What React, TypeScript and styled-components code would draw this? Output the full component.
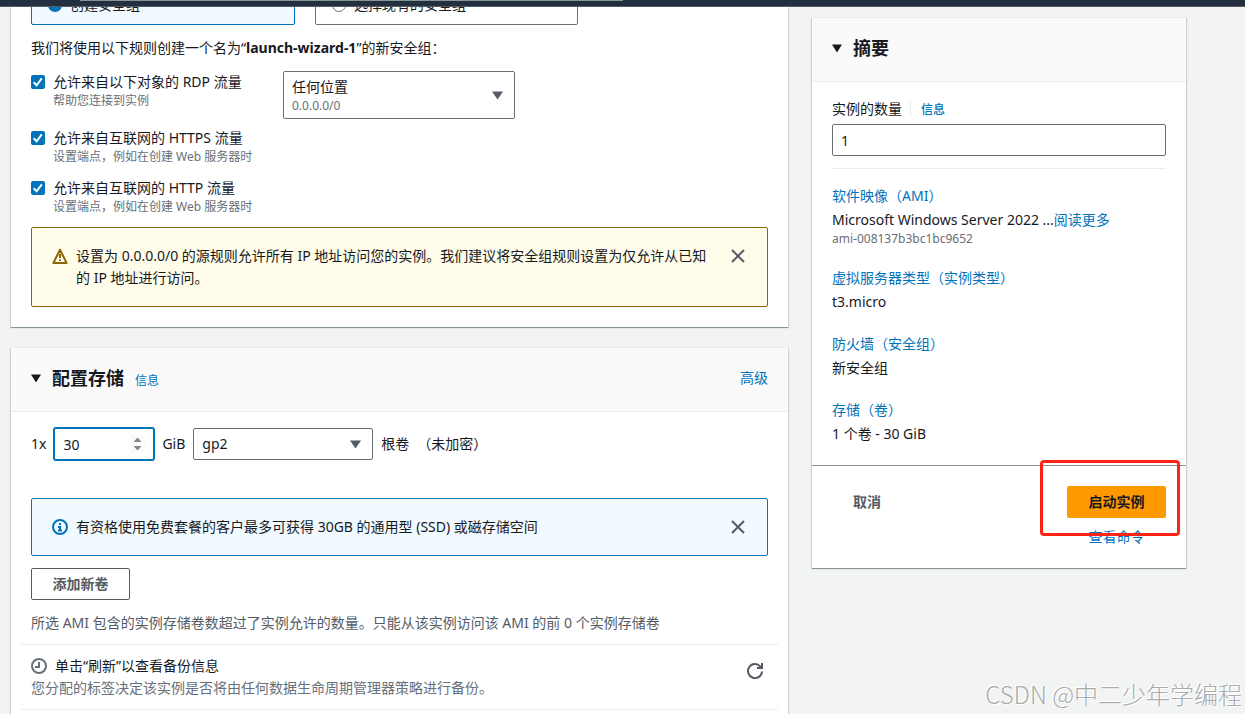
import React from 'react';
import styled, { createGlobalStyle, css } from 'styled-components';

const color = {
  page: '#f2f3f3',
  text: '#16191f',
  secondary: '#545b64',
  hint: '#687078',
  link: '#0073bb',
  line: '#eaeded',
  header: '#fafafa',
  infoBg: '#f1faff',
  warn: '#8d6605',
  warnBg: '#fffce9',
  orange: '#ff9900',
  nav: '#232f3e',
};

const GlobalStyle = createGlobalStyle`
  *, *::before, *::after { box-sizing: border-box; }
  body {
    margin: 0;
    background: ${color.page};
    color: ${color.text};
    font: 14px/22px "Noto Sans", "Noto Sans CJK SC", sans-serif;
  }
  button, input, select { font: inherit; color: inherit; margin: 0; }
  h2, p { margin: 0; }
`;

const Page = styled.div`
  height: 100vh;
  display: flex;
  flex-direction: column;
  overflow: hidden;
  position: relative;
`;

const NavBar = styled.header`
  flex: none;
  height: 7px;
  padding: 0 50% 0 80px;
  background: ${color.nav};
  border-bottom: 1px solid #545b64;
`;

const NavSearchEdge = styled.div`
  height: 1px;
  background: #879596;
`;

const Workspace = styled.main`
  flex: 1;
  min-height: 0;
  display: grid;
  grid-template-columns: minmax(0, 1fr) 374px;
  gap: 24px;
  padding: 0 59px 0 11px;
`;

const MainColumn = styled.div`
  display: flex;
  flex-direction: column;
  gap: 20px;
  min-height: 0;
`;

const Card = styled.section<{ $grow?: boolean }>`
  background: #fff;
  box-shadow: 0 1px 0 0 #879596, 1px 1px 1px 0 rgba(0, 28, 36, 0.15),
    -1px 1px 1px 0 rgba(0, 28, 36, 0.15);
  ${(p) => p.$grow && css`flex: 1;`}
`;

const CardHeader = styled.div`
  display: flex;
  align-items: center;
  gap: 11px;
  padding: 19px 20px 22px;
  background: ${color.header};
  border-top: 1px solid ${color.line};
  border-bottom: 1px solid ${color.line};
`;

const TitleGroup = styled.div`
  display: flex;
  align-items: baseline;
  gap: 11px;
  height: 22px;
`;

const CardTitle = styled.h2`
  font-size: 18px;
  line-height: 22px;
  font-weight: 700;
`;

const Link = styled.a<{ $small?: boolean; $strong?: boolean; $end?: boolean }>`
  color: ${color.link};
  text-decoration: none;
  ${(p) => p.$small && css`font-size: 12px;`}
  ${(p) => p.$strong && css`font-weight: 500;`}
  ${(p) => p.$end && css`margin-left: auto;`}
`;

const SecurityBody = styled.div`
  display: flex;
  flex-direction: column;
  gap: 12px;
  padding: 0 20px 20px;
`;

const Tiles = styled.div`
  height: 18px;
  overflow: hidden;
  display: grid;
  grid-template-columns: 264px 263px;
  gap: 20px;
  align-content: end;
`;

const Tile = styled.label<{ $selected?: boolean }>`
  display: flex;
  align-items: center;
  gap: 8px;
  padding: 8px 16px;
  border: 1px solid ${(p) => (p.$selected ? color.link : color.hint)};
  border-radius: 2px;
  background: ${(p) => (p.$selected ? color.infoBg : '#fff')};
`;

const Radio = styled.input`
  appearance: none;
  width: 14px;
  height: 14px;
  border: 1px solid ${color.hint};
  border-radius: 50%;
  background: #fff;
  &:checked { border: 5px solid ${color.link}; }
`;

const RuleList = styled.div`
  display: flex;
  flex-direction: column;
  gap: 12px;
`;

const RdpRow = styled.div`
  display: grid;
  grid-template-columns: 252px 232px;
  align-items: start;
  margin-bottom: -4px;
`;

const Check = styled.label`
  display: grid;
  grid-template-columns: 14px minmax(0, 1fr);
  column-gap: 8px;
`;

const CheckMark = styled.span`
  display: grid;
  height: 22px;
  align-items: center;
  & > * { grid-area: 1 / 1; }
  svg { pointer-events: none; }
`;

const CheckBox = styled.input`
  appearance: none;
  width: 14px;
  height: 14px;
  border-radius: 2px;
  background: ${color.link};
`;

const Hint = styled.span`
  display: block;
  color: ${color.hint};
  font-size: 12px;
  line-height: 16px;
`;

const SelectBox = styled.div<{ $tall?: boolean }>`
  display: grid;
  align-items: center;
  width: ${(p) => (p.$tall ? '232px' : '180px')};
  & > * { grid-area: 1 / 1; }
  & > svg { justify-self: end; margin-right: 12px; pointer-events: none; }
  & > ${Hint} { align-self: end; padding: 0 9px 5px; pointer-events: none; }
`;

const Select = styled.select<{ $tall?: boolean }>`
  appearance: none;
  width: 100%;
  height: ${(p) => (p.$tall ? '48px' : '32px')};
  padding: ${(p) => (p.$tall ? '0 32px 16px 8px' : '0 32px 0 8px')};
  border: 1px solid ${color.hint};
  border-radius: 2px;
  background: #fff;
`;

const Alert = styled.div<{ $kind: 'warning' | 'info' }>`
  display: flex;
  align-items: flex-start;
  gap: 8px;
  padding: 17px 21px 17px 20px;
  border: 1px solid ${(p) => (p.$kind === 'warning' ? color.warn : color.link)};
  border-radius: 2px;
  background: ${(p) => (p.$kind === 'warning' ? color.warnBg : color.infoBg)};
  & > svg { flex: none; margin-top: 3px; }
`;

const AlertText = styled.p`
  flex: 1;
  min-width: 0;
  padding-right: 12px;
`;

const IconButton = styled.button`
  display: flex;
  flex: none;
  padding: 3px 0;
  border: 0;
  background: none;
  color: ${color.secondary};
`;

const StorageBody = styled.div`
  display: flex;
  flex-direction: column;
  align-items: stretch;
  gap: 12px;
  padding: 16px 20px 0;
`;

const VolumeRow = styled.div`
  display: flex;
  align-items: center;
  gap: 8px;
  margin-bottom: 26px;
`;

const TextInput = styled.input<{ $active?: boolean }>`
  appearance: textfield;
  width: 100%;
  height: 32px;
  padding: 0 8px;
  border: 1px solid ${(p) => (p.$active ? color.link : color.hint)};
  border-radius: 2px;
  background: #fff;
  outline: none;
  box-shadow: ${(p) => (p.$active ? `0 0 0 1px ${color.link}` : 'none')};
  &::-webkit-inner-spin-button { appearance: none; margin: 0; }
`;

const SizeField = styled.div`
  display: grid;
  align-items: center;
  width: 100px;
  & > * { grid-area: 1 / 1; }
  & > svg { justify-self: end; margin-right: 9px; pointer-events: none; }
`;

const Button = styled.button<{ $variant: 'normal' | 'primary' | 'plain' }>`
  height: 32px;
  padding: 0 20px;
  border: 1px solid transparent;
  border-radius: 2px;
  background: none;
  color: ${color.secondary};
  font-weight: 700;
  align-self: flex-start;
  ${(p) => p.$variant !== 'plain' && css`min-width: 99px;`}
  ${(p) => p.$variant === 'normal' && css`border-color: ${color.secondary};`}
  ${(p) =>
    p.$variant === 'primary' &&
    css`
      background: ${color.orange};
      color: ${color.text};
    `}
`;

const Note = styled.p`
  color: ${color.secondary};
`;

const BackupRow = styled.div`
  display: flex;
  align-items: flex-start;
  justify-content: space-between;
  margin: -2px -10px 0;
  padding: 10px 15px 10px 10px;
  border-top: 1px solid ${color.line};
  border-bottom: 1px solid ${color.line};
  & > ${IconButton} { padding: 8px 0; }
`;

const BackupTitle = styled.p`
  display: flex;
  align-items: center;
  gap: 8px;
`;

const BackupText = styled.p`
  color: ${color.hint};
`;

const SummaryCard = styled(Card)`
  align-self: start;
  margin-top: 10px;
`;

const SummaryBody = styled.div`
  padding: 16px 20px 20px;
`;

const CountLabel = styled.div`
  display: flex;
  align-items: baseline;
  gap: 10px;
  height: 22px;
  margin-bottom: 4px;
`;

const LabelDivider = styled.span`
  align-self: center;
  width: 1px;
  height: 16px;
  margin-left: -2px;
  background: ${color.line};
`;

const Facts = styled.div`
  display: flex;
  flex-direction: column;
  gap: 20px;
  margin-top: 12px;
  padding-top: 16px;
  border-top: 1px solid ${color.line};
`;

const Fact = styled.div`
  & > ${Link} { display: block; margin-bottom: 2px; }
`;

const SummaryFooter = styled.div`
  display: flex;
  justify-content: space-between;
  padding: 20px;
  border-top: 1px solid #879596;
`;

const LaunchGroup = styled.div`
  position: relative;
  display: flex;
  flex-direction: column;
  align-items: center;
  gap: 8px;
`;

const RedFrame = styled.div`
  position: absolute;
  inset: -26px -14px 12px -27px;
  border: 3px solid #ff2317;
  border-radius: 4px;
  pointer-events: none;
`;

const Watermark = styled.div`
  position: absolute;
  right: 3px;
  bottom: 4px;
  font: 300 24px/32px "Noto Sans CJK SC", sans-serif;
  color: #a9aaaa;
  text-shadow: 1px 1px 0 #fff, -1px -1px 0 #fff;
  pointer-events: none;
`;

const Caret = ({ fill = color.secondary, size = 11 }: { fill?: string; size?: number }) => (
  <svg width={size} height="9" viewBox="0 0 11 9" preserveAspectRatio="none" fill={fill} aria-hidden="true">
    <path d="M0 0.5h11L5.5 8.5z" />
  </svg>
);

const Tick = () => (
  <svg width="14" height="14" viewBox="0 0 14 14" fill="none" stroke="#fff" strokeWidth="2" aria-hidden="true">
    <path d="M2.6 7.3l3 3 5.2-7" />
  </svg>
);

const CloseIcon = () => (
  <svg width="16" height="16" viewBox="0 0 16 16" stroke="currentColor" strokeWidth="2" aria-hidden="true">
    <path d="M2 2l12 12M14 2L2 14" />
  </svg>
);

const WarningIcon = () => (
  <svg width="16" height="16" viewBox="0 0 16 16" fill="none" stroke={color.warn} strokeWidth="2" aria-hidden="true">
    <path d="M8 1.7L1.4 15h13.2z" strokeLinejoin="round" />
    <path d="M8 6v4M8 11.2v1.8" />
  </svg>
);

const InfoIcon = () => (
  <svg width="16" height="16" viewBox="0 0 16 16" fill="none" stroke={color.link} strokeWidth="2" aria-hidden="true">
    <circle cx="8" cy="8" r="7" />
    <path d="M8 4v2M6 8h2v3M6 11.5h4" />
  </svg>
);

const ClockIcon = () => (
  <svg width="16" height="16" viewBox="0 0 16 16" fill="none" stroke={color.hint} strokeWidth="2" aria-hidden="true">
    <circle cx="8" cy="8" r="7" />
    <path d="M8 4v5H4" />
  </svg>
);

const RefreshIcon = () => (
  <svg width="16" height="16" viewBox="0 0 16 16" fill="none" stroke="currentColor" strokeWidth="2" aria-hidden="true">
    <path d="M15 8.5A7 7 0 1 1 13.2 3.4l1 1.1" />
    <path d="M15 0v5h-5" />
  </svg>
);

const Spinner = () => (
  <svg width="15" height="18" viewBox="0 0 15 18" fill="#858585" aria-hidden="true">
    <path d="M0 0h15v18H0z" fill="#fafafa" />
    <path d="M3.5 7h8l-4-4.5zM3.5 11h8l-4 4.5z" />
  </svg>
);

type RuleProps = { id: string; title: string; hint: string };

const Rule = ({ id, title, hint }: RuleProps) => (
  <Check htmlFor={id}>
    <CheckMark>
      <CheckBox id={id} type="checkbox" defaultChecked />
      <Tick />
    </CheckMark>
    <span>
      {title}
      <Hint>{hint}</Hint>
    </span>
  </Check>
);

const CloseButton = () => (
  <IconButton type="button" aria-label="关闭">
    <CloseIcon />
  </IconButton>
);

export default function App() {
  return (
    <>
      <GlobalStyle />
      <Page>
        <NavBar>
          <NavSearchEdge />
        </NavBar>
        <Workspace>
          <MainColumn>
            <Card>
              <SecurityBody>
                <Tiles>
                  <Tile $selected>
                    <Radio type="radio" name="group" defaultChecked />
                    创建安全组
                  </Tile>
                  <Tile>
                    <Radio type="radio" name="group" />
                    选择现有的安全组
                  </Tile>
                </Tiles>
                <p>
                  我们将使用以下规则创建一个名为“<strong>launch-wizard-1</strong>”的新安全组：
                </p>
                <RuleList>
                  <RdpRow>
                    <Rule id="rdp" title="允许来自以下对象的 RDP 流量" hint="帮助您连接到实例" />
                    <SelectBox $tall>
                      <Select $tall aria-label="来源">
                        <option>任何位置</option>
                      </Select>
                      <Hint>0.0.0.0/0</Hint>
                      <Caret />
                    </SelectBox>
                  </RdpRow>
                  <Rule id="https" title="允许来自互联网的 HTTPS 流量" hint="设置端点，例如在创建 Web 服务器时" />
                  <Rule id="http" title="允许来自互联网的 HTTP 流量" hint="设置端点，例如在创建 Web 服务器时" />
                </RuleList>
                <Alert $kind="warning">
                  <WarningIcon />
                  <AlertText>
                    设置为 0.0.0.0/0 的源规则允许所有 IP 地址访问您的实例。我们建议将安全组规则设置为仅允许从已知的 IP 地址进行访问。
                  </AlertText>
                  <CloseButton />
                </Alert>
              </SecurityBody>
            </Card>

            <Card $grow>
              <CardHeader>
                <Caret fill={color.text} size={10} />
                <TitleGroup>
                  <CardTitle>配置存储</CardTitle>
                  <Link href="#storage-info" $small>信息</Link>
                </TitleGroup>
                <Link href="#advanced" $end>高级</Link>
              </CardHeader>
              <StorageBody>
                <VolumeRow>
                  <label htmlFor="size">1x</label>
                  <SizeField>
                    <TextInput id="size" type="number" defaultValue={30} $active />
                    <Spinner />
                  </SizeField>
                  <span>GiB</span>
                  <SelectBox>
                    <Select aria-label="卷类型">
                      <option>gp2</option>
                    </Select>
                    <Caret />
                  </SelectBox>
                  <span>根卷</span>
                  <span>（未加密）</span>
                </VolumeRow>
                <Alert $kind="info">
                  <InfoIcon />
                  <AlertText>有资格使用免费套餐的客户最多可获得 30GB 的通用型 (SSD) 或磁存储空间</AlertText>
                  <CloseButton />
                </Alert>
                <Button type="button" $variant="normal">添加新卷</Button>
                <Note>所选 AMI 包含的实例存储卷数超过了实例允许的数量。只能从该实例访问该 AMI 的前 0 个实例存储卷</Note>
                <BackupRow>
                  <div>
                    <BackupTitle>
                      <ClockIcon />
                      单击“刷新”以查看备份信息
                    </BackupTitle>
                    <BackupText>您分配的标签决定该实例是否将由任何数据生命周期管理器策略进行备份。</BackupText>
                  </div>
                  <IconButton type="button" aria-label="刷新">
                    <RefreshIcon />
                  </IconButton>
                </BackupRow>
              </StorageBody>
            </Card>
          </MainColumn>

          <SummaryCard>
            <CardHeader>
              <Caret fill={color.text} size={10} />
              <CardTitle>摘要</CardTitle>
            </CardHeader>
            <SummaryBody>
              <CountLabel>
                <label htmlFor="count">实例的数量</label>
                <LabelDivider />
                <Link href="#count-info" $small $strong>信息</Link>
              </CountLabel>
              <TextInput id="count" type="number" defaultValue={1} />
              <Facts>
                <Fact>
                  <Link href="#ami">软件映像（AMI）</Link>
                  <p>
                    Microsoft Windows Server 2022 ...<Link href="#more">阅读更多</Link>
                  </p>
                  <Hint>ami-008137b3bc1bc9652</Hint>
                </Fact>
                <Fact>
                  <Link href="#type">虚拟服务器类型（实例类型）</Link>
                  <p>t3.micro</p>
                </Fact>
                <Fact>
                  <Link href="#firewall">防火墙（安全组）</Link>
                  <p>新安全组</p>
                </Fact>
                <Fact>
                  <Link href="#volumes">存储（卷）</Link>
                  <p>1 个卷 - 30 GiB</p>
                </Fact>
              </Facts>
            </SummaryBody>
            <SummaryFooter>
              <Button type="button" $variant="plain">取消</Button>
              <LaunchGroup>
                <Button type="button" $variant="primary">启动实例</Button>
                <Link href="#command">查看命令</Link>
                <RedFrame />
              </LaunchGroup>
            </SummaryFooter>
          </SummaryCard>
        </Workspace>
        <Watermark>CSDN @中二少年学编程</Watermark>
      </Page>
    </>
  );
}
